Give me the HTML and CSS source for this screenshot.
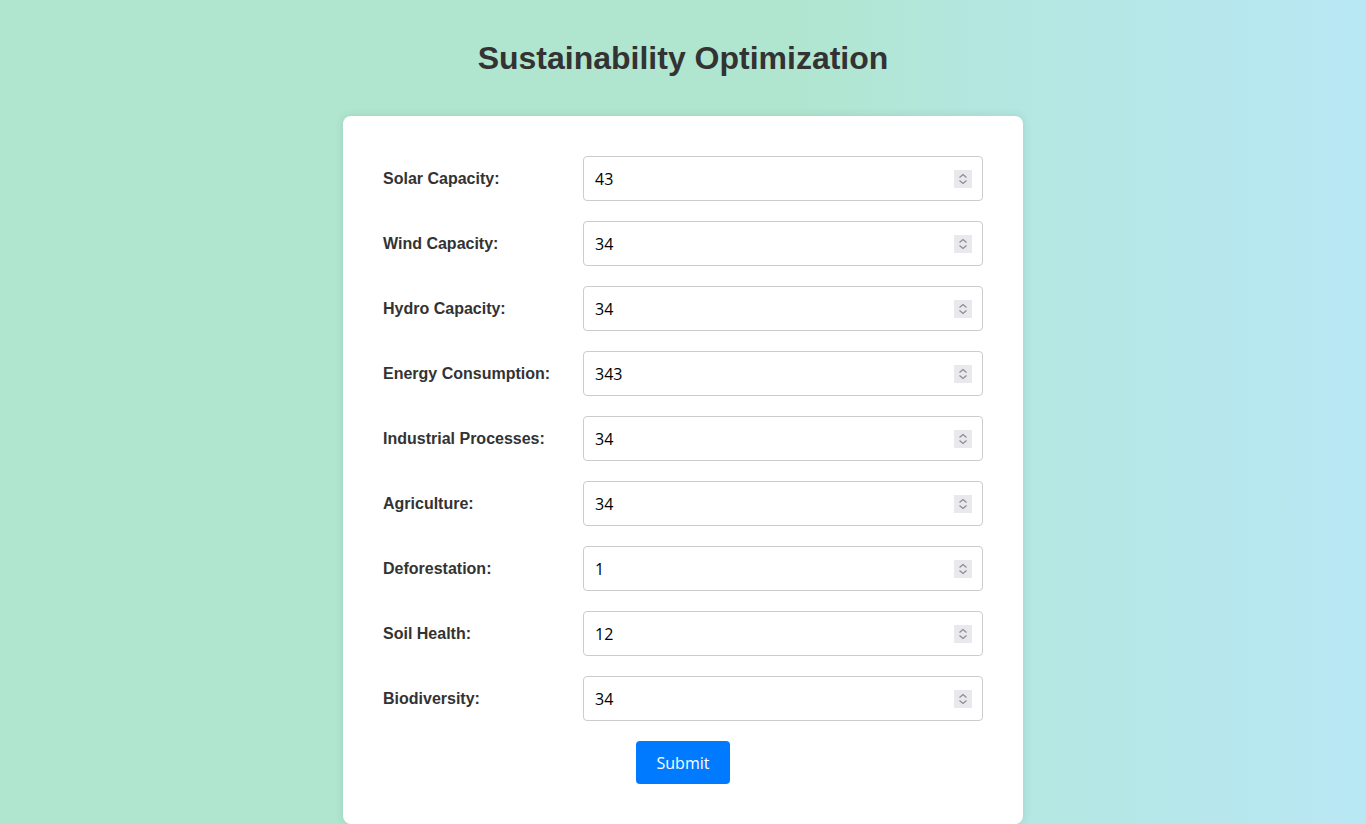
FILE: index.html
```html
<!DOCTYPE html>
<html lang="en">
<head>
<meta charset="utf-8">
<title>Sustainability Optimization</title>
<link rel="stylesheet" href="styles.css">
</head>
<body>
<h1 class="title">Sustainability Optimization</h1>
<form class="card">
  <div class="row"><label class="label" for="solar">Solar Capacity:</label><span class="field-wrap"><input class="field" id="solar" type="number" value="43"><span class="spin"><svg viewBox="0 0 18 18" width="18" height="18"><path d="M5.5 7.5 9 4.5l3.5 3M5.5 10.5 9 13.5l3.5-3" fill="none" stroke="#8a8a90" stroke-width="1.2"/></svg></span></span></div>
  <div class="row"><label class="label" for="wind">Wind Capacity:</label><span class="field-wrap"><input class="field" id="wind" type="number" value="34"><span class="spin"><svg viewBox="0 0 18 18" width="18" height="18"><path d="M5.5 7.5 9 4.5l3.5 3M5.5 10.5 9 13.5l3.5-3" fill="none" stroke="#8a8a90" stroke-width="1.2"/></svg></span></span></div>
  <div class="row"><label class="label" for="hydro">Hydro Capacity:</label><span class="field-wrap"><input class="field" id="hydro" type="number" value="34"><span class="spin"><svg viewBox="0 0 18 18" width="18" height="18"><path d="M5.5 7.5 9 4.5l3.5 3M5.5 10.5 9 13.5l3.5-3" fill="none" stroke="#8a8a90" stroke-width="1.2"/></svg></span></span></div>
  <div class="row"><label class="label" for="energy">Energy Consumption:</label><span class="field-wrap"><input class="field" id="energy" type="number" value="343"><span class="spin"><svg viewBox="0 0 18 18" width="18" height="18"><path d="M5.5 7.5 9 4.5l3.5 3M5.5 10.5 9 13.5l3.5-3" fill="none" stroke="#8a8a90" stroke-width="1.2"/></svg></span></span></div>
  <div class="row"><label class="label" for="industrial">Industrial Processes:</label><span class="field-wrap"><input class="field" id="industrial" type="number" value="34"><span class="spin"><svg viewBox="0 0 18 18" width="18" height="18"><path d="M5.5 7.5 9 4.5l3.5 3M5.5 10.5 9 13.5l3.5-3" fill="none" stroke="#8a8a90" stroke-width="1.2"/></svg></span></span></div>
  <div class="row"><label class="label" for="agri">Agriculture:</label><span class="field-wrap"><input class="field" id="agri" type="number" value="34"><span class="spin"><svg viewBox="0 0 18 18" width="18" height="18"><path d="M5.5 7.5 9 4.5l3.5 3M5.5 10.5 9 13.5l3.5-3" fill="none" stroke="#8a8a90" stroke-width="1.2"/></svg></span></span></div>
  <div class="row"><label class="label" for="defor">Deforestation:</label><span class="field-wrap"><input class="field" id="defor" type="number" value="1"><span class="spin"><svg viewBox="0 0 18 18" width="18" height="18"><path d="M5.5 7.5 9 4.5l3.5 3M5.5 10.5 9 13.5l3.5-3" fill="none" stroke="#8a8a90" stroke-width="1.2"/></svg></span></span></div>
  <div class="row"><label class="label" for="soil">Soil Health:</label><span class="field-wrap"><input class="field" id="soil" type="number" value="12"><span class="spin"><svg viewBox="0 0 18 18" width="18" height="18"><path d="M5.5 7.5 9 4.5l3.5 3M5.5 10.5 9 13.5l3.5-3" fill="none" stroke="#8a8a90" stroke-width="1.2"/></svg></span></span></div>
  <div class="row"><label class="label" for="bio">Biodiversity:</label><span class="field-wrap"><input class="field" id="bio" type="number" value="34"><span class="spin"><svg viewBox="0 0 18 18" width="18" height="18"><path d="M5.5 7.5 9 4.5l3.5 3M5.5 10.5 9 13.5l3.5-3" fill="none" stroke="#8a8a90" stroke-width="1.2"/></svg></span></span></div>
  <div class="actions"><button class="submit" type="submit">Submit</button></div>
</form>
</body>
</html>
```
FILE: styles.css
```css
* { box-sizing: border-box; }
html, body { height: 100%; }
body {
  margin: 0;
  min-height: 824px;
  overflow: hidden;
  font-family: "Liberation Sans", Arial, sans-serif;
  color: #333;
  background: linear-gradient(90deg, #b0e6d0 0%, #b0e6d0 58%, #b5e7e3 76%, #b9e7f5 100%);
  display: flex;
  flex-direction: column;
  align-items: center;
}
.title {
  margin: 40px 0 39px;
  font-size: 32px;
  line-height: 37px;
  font-weight: bold;
  color: #333;
}
.card {
  width: 680px;
  background: #fff;
  border-radius: 8px;
  padding: 40px;
  box-shadow: 0 0 10px rgba(0,0,0,0.1);
  display: flex;
  flex-direction: column;
  gap: 20px;
}
.row {
  display: flex;
  align-items: center;
}
.label {
  width: 200px;
  font-weight: bold;
  font-size: 16px;
  color: #333;
}
.field-wrap {
  position: relative;
  display: block;
  width: 400px;
  height: 45px;
}
.field {
  display: block;
  width: 100%;
  height: 45px;
  padding: 10px 40px 10px 11px;
  border: 1px solid #ccc;
  border-radius: 4px;
  font-family: "Open Sans", sans-serif;
  font-size: 16px;
  color: #000;
  background: #fff;
  -moz-appearance: textfield;
}
.field::-webkit-inner-spin-button,
.field::-webkit-outer-spin-button {
  -webkit-appearance: none;
  margin: 0;
}
.spin {
  position: absolute;
  right: 11px;
  top: 14px;
  width: 18px;
  height: 18px;
  background: #e9e9ed;
  display: flex;
}
.actions {
  display: flex;
  justify-content: center;
}
.submit {
  height: 43px;
  padding: 0 21px;
  border: none;
  border-radius: 4px;
  background: #007bff;
  color: #fff;
  font-family: "Open Sans", sans-serif;
  font-size: 16px;
  cursor: pointer;
}
```
